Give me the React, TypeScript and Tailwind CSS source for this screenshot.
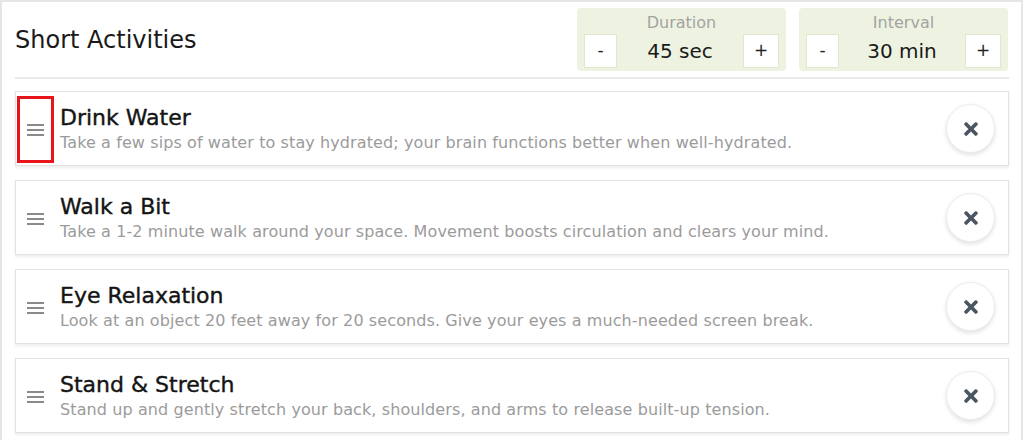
import { FaTimes } from "react-icons/fa";

const activities = [
  {
    title: "Drink Water",
    text: "Take a few sips of water to stay hydrated; your brain functions better when well-hydrated.",
  },
  {
    title: "Walk a Bit",
    text: "Take a 1-2 minute walk around your space. Movement boosts circulation and clears your mind.",
  },
  {
    title: "Eye Relaxation",
    text: "Look at an object 20 feet away for 20 seconds. Give your eyes a much-needed screen break.",
  },
  {
    title: "Stand & Stretch",
    text: "Stand up and gently stretch your back, shoulders, and arms to release built-up tension.",
  },
];

function Stepper({ label, value }: { label: string; value: string }) {
  return (
    <div className="w-[209px] h-[63px] rounded-[4px] bg-[#eef3e1] flex flex-col px-[7px] pb-[3px]">
      <div className="h-[26px] flex items-center justify-center pt-[3px] text-[16px] text-[#a3a3a3]">
        {label}
      </div>
      <div className="flex-1 flex items-center justify-between">
        <button className="w-[33px] h-[34px] bg-white border border-[#dfe8cc] text-[17px] text-[#222] flex items-center justify-center">
          -
        </button>
        <span className="text-[20px] text-[#1a1a1a]">{value}</span>
        <button className="w-[36px] h-[34px] bg-white border border-[#dfe8cc] text-[17px] text-[#222] flex items-center justify-center">
          +
        </button>
      </div>
    </div>
  );
}

function Handle() {
  return (
    <svg width="17" height="14" viewBox="0 0 17 14">
      <rect x="0" y="1" width="17" height="2" fill="#8a8a8a" />
      <rect x="0" y="6" width="17" height="2" fill="#8a8a8a" />
      <rect x="0" y="11" width="17" height="2" fill="#8a8a8a" />
    </svg>
  );
}

export default function App() {
  return (
    <div className="w-[1023px] h-[440px] overflow-hidden bg-white border-t-2 border-x-2 border-[#e6e6e6] pl-[13px] pr-[12px] font-['DejaVu_Sans',sans-serif]">
      <div className="flex items-center justify-between pt-[6px] pb-[6px] border-b-2 border-[#ebebeb]">
        <h1 className="text-[24px] text-[#1a1a1a]">Short Activities</h1>
        <div className="flex gap-[13px] mr-[1px]">
          <Stepper label="Duration" value="45 sec" />
          <Stepper label="Interval" value="30 min" />
        </div>
      </div>

      <div className="flex flex-col gap-[14px] mt-[12px]">
        {activities.map((a, i) => (
          <div
            key={a.title}
            className="h-[75px] flex items-center bg-white border border-[#e2e2e2] shadow-[0_2px_3px_rgba(0,0,0,0.07)]"
          >
            <div
              className={
                "ml-[1px] w-[37px] h-[67px] self-start mt-[4px] flex items-center justify-center border-[3px] " +
                (i === 0 ? "border-[#e8141c]" : "border-transparent")
              }
            >
              <Handle />
            </div>
            <div className="flex-1 ml-[6px] flex flex-col">
              <span className="text-[22px] leading-[26px] text-[#151515] [-webkit-text-stroke:0.4px_#151515]">
                {a.title}
              </span>
              <span className="mt-[1px] text-[16px] leading-[21px] tracking-[0.1px] text-[#9b9b9b]">{a.text}</span>
            </div>
            <button className="w-[49px] h-[49px] mr-[13px] rounded-full bg-white border border-[#ececec] shadow-[0_2px_4px_rgba(0,0,0,0.12)] flex items-center justify-center text-[#4b5662]">
              <FaTimes size={20} />
            </button>
          </div>
        ))}
      </div>
    </div>
  );
}
